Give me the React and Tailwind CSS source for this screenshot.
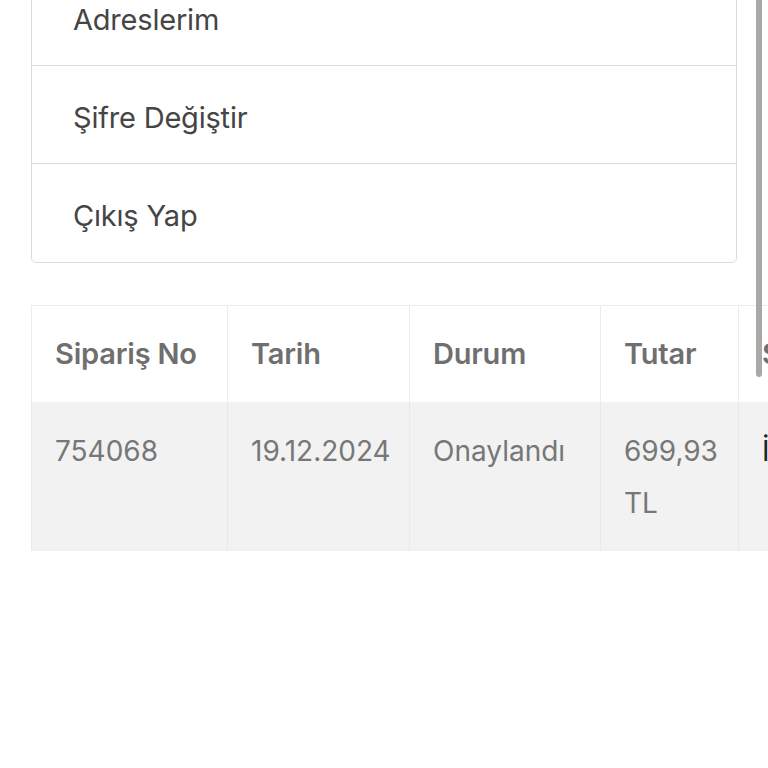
export default function App() {
  const font = { fontFamily: "Inter, 'Noto Sans', sans-serif" };
  const items = ["Adreslerim", "Şifre Değiştir", "Çıkış Yap"];
  return (
    <div className="relative w-[768px] h-[768px] overflow-hidden bg-white" style={font}>
      <div className="px-[31px] mt-[-33px]">
        <div className="border border-[#dcdcdc] rounded-[5px] bg-white">
          {items.map((t, i) => (
            <div
              key={t}
              className={`h-[98px] flex items-center pl-[41px] pt-[6px] text-[29px] text-[#454545] tracking-[-0.2px] ${i < items.length - 1 ? "border-b border-[#dcdcdc]" : ""}`}
            >
              {t}
            </div>
          ))}
        </div>
      </div>
      <div className="pl-[31px] mt-[42px]">
        <table className="border-collapse table-fixed w-[900px]">
          <colgroup>
            <col className="w-[196px]" />
            <col className="w-[182px]" />
            <col className="w-[191px]" />
            <col className="w-[138px]" />
            <col className="w-[193px]" />
          </colgroup>
          <thead>
            <tr className="bg-white">
              {["Sipariş No", "Tarih", "Durum", "Tutar", "Seçenek"].map((h) => (
                <th
                  key={h}
                  className="h-[96px] text-left align-middle px-[23px] text-[29px] font-semibold text-[#6f6f6f] border-t border-l border-r border-[#ececec] tracking-[-0.2px]"
                >
                  {h}
                </th>
              ))}
            </tr>
          </thead>
          <tbody>
            <tr className="bg-[#f2f2f2]">
              {["754068", "19.12.2024", "Onaylandı", "699,93 TL"].map((c) => (
                <td
                  key={c}
                  className="align-top px-[23px] pt-[23px] pb-[22px] text-[28px] leading-[52px] text-[#777777] border-l border-r border-[#e9e9e9]"
                >
                  {c}
                </td>
              ))}
              <td className="align-top px-[23px] pt-[23px] pb-[22px] text-[28px] leading-[52px] text-[#222] border-l border-[#e9e9e9]">
                İncele
              </td>
            </tr>
          </tbody>
        </table>
      </div>
      <div className="absolute left-[756px] top-[-10px] w-[6px] h-[387px] rounded-full bg-[#a8a8a8]" />
    </div>
  );
}
